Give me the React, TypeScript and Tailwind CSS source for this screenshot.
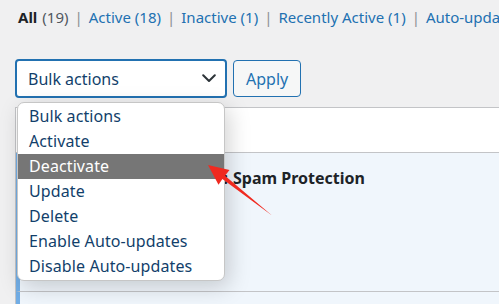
import React from 'react';

const filters = [
  { label: 'Active', count: 18 },
  { label: 'Inactive', count: 1 },
  { label: 'Recently Active', count: 1 },
  { label: 'Auto-updates Disabled', count: 19 },
];

const actions = [
  'Bulk actions',
  'Activate',
  'Deactivate',
  'Update',
  'Delete',
  'Enable Auto-updates',
  'Disable Auto-updates',
];

function Chevron() {
  return (
    <svg width="14" height="9" viewBox="0 0 14 9" fill="none">
      <path d="M1.2 1.2 7 7 12.8 1.2" stroke="#2c3338" strokeWidth="2" strokeLinecap="round" strokeLinejoin="round" />
    </svg>
  );
}

function RedArrow() {
  return (
    <svg className="absolute left-0 top-0 pointer-events-none" width="499" height="304" viewBox="0 0 499 304">
      <polygon
        points="208,165 229.5,170 225,175.8 272,215.5 222.4,179 218.5,184.8"
        fill="#f02a20"
      />
    </svg>
  );
}

export default function App() {
  return (
    <div className="relative w-[499px] h-[304px] overflow-hidden bg-[#f0f0f1] font-['Noto_Sans',sans-serif]">
      {/* status filters */}
      <div className="flex items-center whitespace-nowrap pl-[18px] pt-[7px] text-[15px] leading-[20px]">
        <span className="font-bold text-[#1d2327]">All</span>
        <span className="ml-[5px] text-[#50575e]">(19)</span>
        {filters.map((f) => (
          <React.Fragment key={f.label}>
            <span className="mx-[6px] text-[#8c8f94]">|</span>
            <span className="text-[#2271b1]">
              {f.label} ({f.count})
            </span>
          </React.Fragment>
        ))}
      </div>

      {/* bulk actions row */}
      <div className="flex items-start gap-[6px] pl-[15px] mt-[32px]">
        <div className="w-[212px] h-[39px] rounded-[4px] border-2 border-[#2271b1] bg-white flex items-center justify-between pl-[11px] pr-[9px]">
          <span className="text-[16px] text-[#123f6b]">Bulk actions</span>
          <Chevron />
        </div>
        <button className="mt-px h-[37px] px-[12px] rounded-[4px] border border-[#2271b1] bg-[#f6f7f7] text-[16px] text-[#2271b1]">
          Apply
        </button>
      </div>

      {/* plugins table */}
      <div className="ml-[15px] mt-[9px] border-t border-l border-[#c3c4c7]">
        <div className="h-[45px] bg-white border-b border-[#c3c4c7]" />
        <div className="h-[139px] bg-[#f0f6fc] border-l-4 border-l-[#72aee6] border-b border-b-[#c3c4c7] flex items-start pt-[13px]">
          <div className="w-[208px] text-right whitespace-nowrap text-[16px] font-bold text-[#1d2327]">Akismet Anti-Spam:</div>
          <div className="ml-[5px] whitespace-nowrap text-[16px] font-bold text-[#1d2327]">Spam Protection</div>
        </div>
        <div className="h-[40px] bg-[#f0f6fc] border-l-4 border-l-[#72aee6]" />
      </div>

      {/* open select list */}
      <div className="absolute left-[17px] top-[102px] w-[208px] rounded-[7px] border border-[#c6c6c6] bg-white py-px shadow-[4px_6px_22px_rgba(0,0,0,0.18)] overflow-hidden">
        {actions.map((a) => (
          <div
            key={a}
            className={
              a === 'Deactivate'
                ? 'h-[25px] pl-[11px] text-[16px] leading-[25px] tracking-[0.1px] bg-[#767676] text-white'
                : 'h-[25px] pl-[11px] text-[16px] leading-[25px] tracking-[0.1px] text-[#123f6b]'
            }
          >
            {a}
          </div>
        ))}
      </div>

      <RedArrow />
    </div>
  );
}
